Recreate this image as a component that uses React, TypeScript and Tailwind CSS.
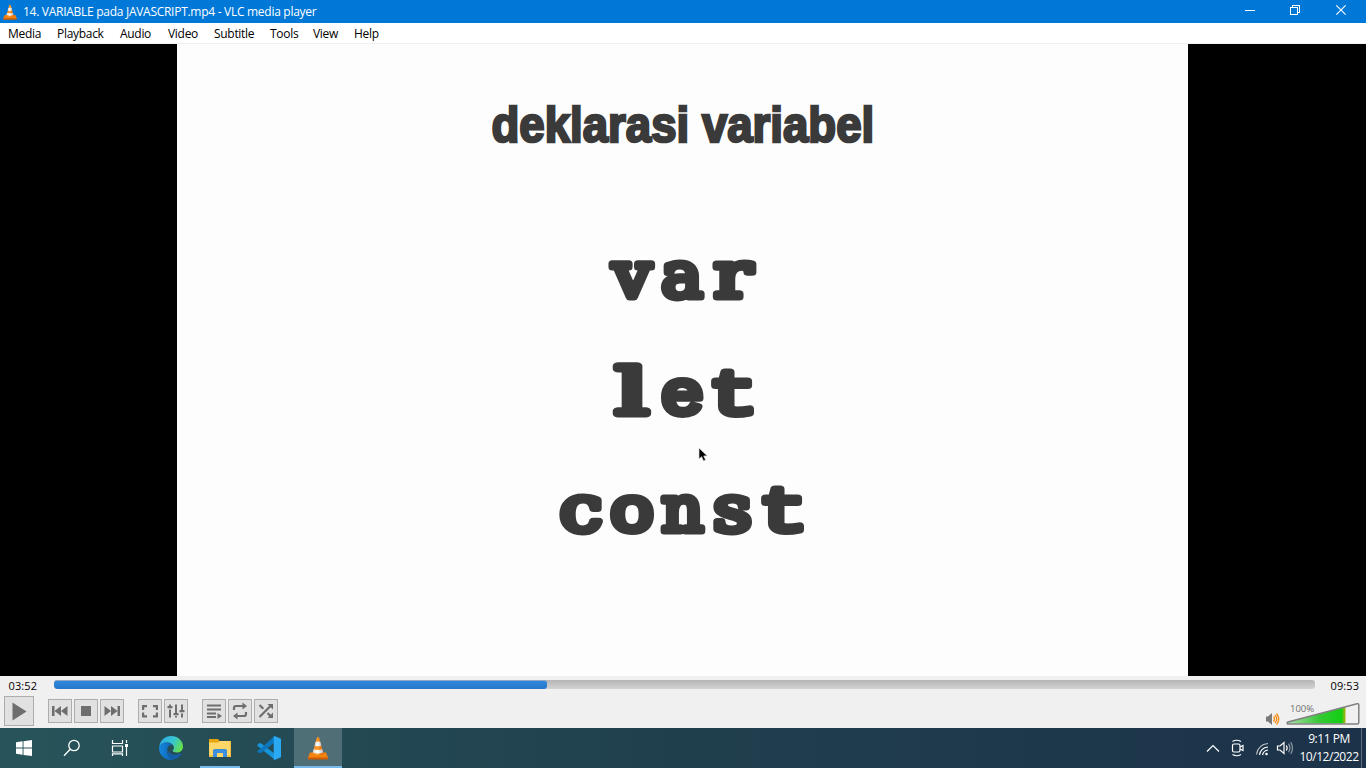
import React from "react";

const UI = "font-['Open_Sans','Noto_Sans',sans-serif]";

function Cone({ size }: { size: number }) {
  return (
    <svg width={size} height={size} viewBox="0 0 24 24" className="block shrink-0">
      <defs>
        <linearGradient id="coneBody" x1="0" x2="1">
          <stop offset="0" stopColor="#f08a1c" />
          <stop offset=".45" stopColor="#ff9a2a" />
          <stop offset="1" stopColor="#d95f00" />
        </linearGradient>
        <linearGradient id="coneWhite" x1="0" x2="1">
          <stop offset="0" stopColor="#d8d8d8" />
          <stop offset=".45" stopColor="#ffffff" />
          <stop offset="1" stopColor="#bdbdbd" />
        </linearGradient>
      </defs>
      <path d="M4 16.500h16l2 5q0 .9-1 .9H3q-1 0-1-.9z" fill="#f18210" />
      <path d="M2 21.500h20l.2 1.200q-.2.9-1.200.9H3q-1 0-1.200-.9z" fill="#d15c00" />
      <path d="M10.900 1.600q1.100-.7 2.200 0L17.600 18q-5.600 2.800-11.200 0z" fill="url(#coneBody)" />
      <path d="M9.700 5.700h4.600l1.100 4q-3.400 1.300-6.800 0z" fill="url(#coneWhite)" />
      <path d="M7.600 13.300q4.400 1.500 8.800 0l.9 3.300q-5.300 2.300-10.600 0z" fill="url(#coneWhite)" />
    </svg>
  );
}

function TitleBar() {
  return (
    <div className="flex h-[23px] shrink-0 items-center bg-[#0078d7] text-white">
      <div className="ml-[2px] flex w-[21px] items-center">
        <Cone size={16} />
      </div>
      <span className="grow whitespace-nowrap text-[12px] leading-[23px] tracking-[-0.28px]">
        14. VARIABLE pada JAVASCRIPT.mp4 - VLC media player
      </span>
      <svg width="139" height="23" viewBox="0 0 139 23" fill="none" stroke="#fff" className="shrink-0">
        <path d="M18 10.500h10" shapeRendering="crispEdges" />
        <path d="M63.500 7.500h7v7h-7z M65.500 7.500v-2h7v7h-2" shapeRendering="crispEdges" />
        <path d="M109.300 5.300l9.400 9.400M118.700 5.300l-9.400 9.400" strokeWidth="1.100" />
      </svg>
    </div>
  );
}

const menus: [string, string][] = [
  ["Media", "w-[49px]"],
  ["Playback", "w-[63px]"],
  ["Audio", "w-[48px]"],
  ["Video", "w-[46px]"],
  ["Subtitle", "w-[56px]"],
  ["Tools", "w-[43px]"],
  ["View", "w-[41px]"],
  ["Help", "w-[40px]"],
];

function MenuBar() {
  return (
    <div className="flex h-[21px] shrink-0 border-b border-[#f0f0f0] bg-white pl-2 text-[12px] leading-[21px] tracking-[-0.3px] text-black">
      {menus.map(([name, w]) => (
        <span key={name} className={`${w} whitespace-nowrap`}>
          {name}
        </span>
      ))}
    </div>
  );
}

const SERIF = "'DejaVu Serif', serif";
const MONO = "'Liberation Mono', monospace";

/* [character, font, centre x, advance width] */
type Glyph = [string, string, number, number];

const words: { y: number; glyphs: Glyph[] }[] = [
  { y: 56.5, glyphs: [["v", SERIF, 455, 39], ["a", SERIF, 505, 41.500], ["r", SERIF, 556, 38]] },
  { y: 174, glyphs: [["l", SERIF, 455, 33], ["e", MONO, 505.300, 44], ["t", MONO, 556, 50]] },
  {
    y: 291,
    glyphs: [["c", SERIF, 404, 42.500], ["o", MONO, 455, 45.500], ["n", SERIF, 505.500, 42], ["s", SERIF, 555.500, 38.500], ["t", MONO, 606, 50]],
  },
];

function Keywords() {
  return (
    <svg
      width="1011"
      height="320"
      viewBox="0 0 1011 320"
      className="block fill-[#3a3a3a] stroke-[#3a3a3a] text-[63px]"
      strokeWidth="7"
      strokeLinejoin="round"
      strokeLinecap="round"
    >
      {words.map((w) => (
        <text key={w.y} y={w.y}>
          {w.glyphs.map(([c, font, cx, adv], i) => (
            <tspan key={i} x={cx - adv / 2} textLength={adv} lengthAdjust="spacingAndGlyphs" fontFamily={font}>
              {c}
            </tspan>
          ))}
        </text>
      ))}
    </svg>
  );
}

function Video() {
  return (
    <div className="flex h-[632px] shrink-0 justify-center bg-black pr-[1px]">
      <div className="relative flex w-[1011px] flex-col items-center bg-[#fdfdfd]">
        <h1 className="mt-[51px] h-[60px] origin-center scale-x-[0.912] whitespace-nowrap font-['Liberation_Sans',sans-serif] text-[50px] leading-[60px] font-bold text-[#3a3a3a] [-webkit-text-stroke:2.500px_#3a3a3a]">
          deklarasi variabel
        </h1>
        <div className="mt-[85px]">
          <Keywords />
        </div>
        <svg width="12" height="16" viewBox="0 0 12 16" className="absolute top-[403px] left-[521px]">
          <path d="M1 1v11l2.600-2.300 1.900 4.200 2.100-.9-1.900-4.100h3.600z" fill="#000" stroke="#ddd" strokeWidth=".7" />
        </svg>
      </div>
    </div>
  );
}

function Btn({ children }: { children: React.ReactNode }) {
  return (
    <div className="flex size-6 items-center justify-center border border-[#adadad] bg-[#e1e1e1]">
      <svg width="22" height="22" viewBox="0 0 22 22" fill="#6e6e6e" className="block shrink-0">
        {children}
      </svg>
    </div>
  );
}

function Controls() {
  return (
    <div className="flex h-[52px] shrink-0 flex-col bg-[#f0f0f0] text-black">
      <div className="flex h-5 items-start">
        <span className="w-[54px] pl-[8.500px] text-[11px] leading-5 tracking-[0.1px]">03:52</span>
        <div className="mt-[4px] h-[9px] w-[1261px] overflow-hidden rounded-[3px] bg-linear-to-b from-[#b5b5b5] to-[#d3d3d3]">
          <div className="h-full w-[493px] rounded-[3px] border-t border-[#8ea9c4] bg-linear-to-b from-[#2f88dc] to-[#2678ca]" />
        </div>
        <span className="grow pl-[15.500px] text-[11px] leading-5 tracking-[0.1px]">09:53</span>
      </div>
      <div className="flex h-8 items-start pl-1">
        <div className="flex size-[30px] border border-[#adadad] bg-[#e1e1e1]">
          <svg width="28" height="28" viewBox="0 0 28 28">
            <path d="M7.500 5.500v18L21.500 14.500z" fill="#6e6e6e" />
          </svg>
        </div>
        <div className="mt-[3px] ml-[14px] flex gap-[2px]">
          <Btn>
            <path d="M3 6h2.500v10H3zM12 6v10l-6.500-5zM18.500 6v10L12 11z" />
          </Btn>
          <Btn>
            <path d="M6 6h10v10H6z" />
          </Btn>
          <Btn>
            <path d="M3.500 6v10l6.500-5zM10 6v10l6.500-5zM16.500 6H19v10h-2.500z" />
          </Btn>
        </div>
        <div className="mt-[3px] ml-[14px] flex gap-[2px]">
          <Btn>
            <path d="M3 5h5v2.200H5.200V10H3zM14 5h5v5h-2.200V7.200H14zM3 12.500h2.200v2.800H8v2.200H3zM16.800 12.500H19v5h-5v-2.200h2.800z" />
          </Btn>
          <Btn>
            <path d="M4 4.500h2V6h1.500v2.200h-5V6H4zM4 9.500h2v8H4zM10 4.500h2V13h1.500v2.200h-5V13H10zM10 16h2v1.500h-2zM16 4.500h2V10h1.500v2.200h-5V10H16zM16 13.500h2v4h-2z" />
          </Btn>
        </div>
        <div className="mt-[3px] ml-[14px] flex gap-[2px]">
          <Btn>
            <path d="M4 4.500h14v2H4zM4 8.500h14v2H4zM4 12.500h9v2H4zM4 16h9v2H4zM14.500 13v6l4.500-3z" />
          </Btn>
          <Btn>
            <path d="M5 10V8q0-2 2-2h7M17 12v2q0 2-2 2H8" fill="none" stroke="#6e6e6e" strokeWidth="2.200" />
            <path d="M13.500 2.500v7L18 6zM8.500 12.500v7L4 16z" />
          </Btn>
          <Btn>
            <path d="M4.500 5l3.800 3.800M12.500 13l3.500 3.500M4.500 17L16 5.500" fill="none" stroke="#6e6e6e" strokeWidth="2.200" />
            <path d="M12.500 4H18v5.500zM18 12.500V18h-5.500z" />
          </Btn>
        </div>
        <div className="ml-auto flex h-8 w-[101px] items-start">
          <svg width="16" height="16" viewBox="0 0 16 16" className="mt-[15px]" fill="none">
            <path d="M1 5.500h2L7 2v12L3 10.500H1z" fill="#7a7a7a" />
            <path d="M8.500 5.500q2 2.500 0 5M10 4q3.500 4 0 8M11.500 2.500q4.500 5.500 0 11" stroke="#f59120" strokeWidth="1.400" />
          </svg>
          <div className="relative ml-[5px]">
            <svg width="76" height="30" viewBox="0 0 76 30" className="block">
              <defs>
                <linearGradient id="vol" x1="0" x2="1">
                  <stop offset="0" stopColor="#a9dda9" />
                  <stop offset=".55" stopColor="#35c835" />
                  <stop offset=".93" stopColor="#12d012" />
                  <stop offset="1" stopColor="#b0b010" />
                </linearGradient>
              </defs>
              <path d="M2 27.500V26L59.500 11v16.500z" fill="url(#vol)" />
              <path d="M1.500 28q-1-1.300.5-2L71 7.700q1.800-.3 1.800 1.300v17.500q0 1.500-1.500 1.500z" fill="none" stroke="#808080" strokeWidth="1.500" />
            </svg>
            <span className="absolute top-[6px] left-[4px] text-[9.500px] leading-[14px] text-[#707070]">100%</span>
          </div>
        </div>
      </div>
    </div>
  );
}

function Cell({ children, on = "" }: { children: React.ReactNode; on?: string }) {
  return <div className={`relative flex h-10 w-12 items-center justify-center ${on}`}>{children}</div>;
}

function Taskbar() {
  return (
    <div className="flex h-10 shrink-0 bg-linear-to-r from-[#27545a] via-[#203f4d] to-[#1c3249] text-white">
      <Cell>
        <svg width="16" height="16" viewBox="0 0 16 16" fill="#fff">
          <path d="M0 2.300L6.600 1.300V7.600H0zM7.500 1.200L16 0V7.600H7.500zM0 8.500H6.600V14.800L0 13.800zM7.500 8.500H16V16L7.500 14.900z" />
        </svg>
      </Cell>
      <Cell>
        <svg width="18" height="18" viewBox="0 0 18 18" fill="none" stroke="#fff" strokeWidth="1.300">
          <circle cx="11" cy="6.500" r="5.200" />
          <path d="M7.200 10.200L1 16.800" />
        </svg>
      </Cell>
      <Cell>
        <svg width="18" height="18" viewBox="0 0 18 18" fill="none" stroke="#fff" strokeWidth="1.200">
          <path d="M1.500 1v3.500h10V1M1.500 7h10v6h-10zM1.500 17v-2.200h10V17M15.500 1v3M15.500 8v9" />
          <path d="M14 5h3v3h-3z" fill="#fff" stroke="none" />
        </svg>
      </Cell>
      <div className="ml-[3px] flex gap-[1px]">
        <Cell>
          <svg width="24" height="24" viewBox="0 0 24 24">
            <defs>
              <linearGradient id="edgeTop" x1="0" x2="1" y1=".2" y2=".6">
                <stop offset="0" stopColor="#2ba9e8" />
                <stop offset=".55" stopColor="#37c6d0" />
                <stop offset="1" stopColor="#66e04b" />
              </linearGradient>
              <linearGradient id="edgeLow" x1="0" x2="1">
                <stop offset="0" stopColor="#1389e0" />
                <stop offset="1" stopColor="#0f5cab" />
              </linearGradient>
            </defs>
            <path d="M.2 11C1 4.500 6 0 12 0c7 0 12 5 12 10.500 0 4-3 6-6.300 6-2.400 0-4-.8-4-1.700 0-.7 1.200-1.200 1.200-3.100C14.900 8.500 11.500 6.500 8 6.500 4 6.500 1.200 8.600.2 11z" fill="url(#edgeTop)" />
            <path d="M.1 11.200C1.100 8.500 4 6.500 8 6.500c2.600 0 4.600 1 5.800 2.400-3.400-.5-5.800 2.300-5.800 6 0 4.500 3.500 8.100 7.500 8.300C13 24.300 9 24.400 5.500 22 1.600 19.500-.3 15.500.1 11.200z" fill="url(#edgeLow)" />
            <path d="M8.600 12.500C7 17 10 22.800 15.500 23.200c3-.9 5.400-2.800 6.700-5 .3-.6-.2-.9-.7-.6-5.500 2.700-13 .5-12.900-5.100z" fill="#145fa8" />
          </svg>
        </Cell>
        <Cell>
          <svg width="24" height="24" viewBox="0 0 24 24">
            <path d="M1 3h9l1.500 2H23v16H1z" fill="#e5a50f" />
            <path d="M1 6.500h9l1.500-1.500H22.500v16H1z" fill="#ffd768" />
            <path d="M5 21v-6.500q0-1.500 1.500-1.500h11q1.500 0 1.500 1.500V21h-4v-4H9v4z" fill="#3c8fdc" />
            <path d="M1 19h4v2H1zM19 19h3.500v2H19z" fill="#f3c14b" />
          </svg>
          <div className="absolute bottom-0 left-1 h-[2px] w-10 bg-[#76b9ed]" />
        </Cell>
        <Cell>
          <svg width="24" height="24" viewBox="0 0 24 24">
            <path d="M17.200.2L3.500 13.500.7 16.300q-.8-.6 0-1.400L18 2z" fill="#0f7cc4" />
            <path d="M.6 8.500L2 7.300l2-.1L18 18v5.800L.6 9.900q-.6-.7 0-1.400z" fill="#1795dc" />
            <path d="M.6 15.400L17.500.1 18 6.200 4 16.900l-2 .1-1.400-1.200z" fill="#0d77bd" />
            <path d="M17.500 0L24 2.800v18.400L17.500 24q-1-.2-.8-1.500V1.500q-.1-1.300.8-1.500z" fill="#2aa8f2" />
          </svg>
        </Cell>
        <Cell on="bg-white/20">
          <Cone size={24} />
          <div className="absolute bottom-0 left-0 h-[2px] w-12 bg-[#76b9ed]" />
        </Cell>
      </div>
      <div className="ml-auto flex h-10">
        <svg width="96" height="40" viewBox="1202 728 96 40" fill="none" stroke="#fff" strokeWidth="1.200">
          <path d="M1207 751.500l6-6 6 6" />
          <rect x="1232.500" y="744" width="7.500" height="8" rx="1.500" />
          <path d="M1240 747l3-1.500v5l-3-1.500M1232.500 741.500q4-2.500 8.500 0M1232.500 754.500q4 2.500 8.500 0" />
          <circle cx="1266.500" cy="754" r="1.300" fill="#fff" stroke="none" />
          <path d="M1262.500 755q1-4.500 5.500-5M1259.500 755q1.200-7.200 8.500-8" />
          <path d="M1256.500 754.500q1.500-10 11.500-11" opacity=".7" />
          <path d="M1277.500 746h2.500l4-3.500v11l-4-3.500h-2.500z" />
          <path d="M1286.300 745.500q1.700 2.500 0 5" />
          <path d="M1288.500 743.700q2.800 4.200 0 8.600M1290.700 742q3.500 6 0 12" opacity=".5" />
        </svg>
        <div className="flex w-[62px] flex-col items-center pt-[2px] text-[12px] leading-[18px] tracking-[-0.45px] whitespace-nowrap">
          <span>9:11 PM</span>
          <span>10/12/2022</span>
        </div>
        <div className="ml-px h-10 w-[5px] border-l border-[#5f7080]" />
      </div>
    </div>
  );
}

export default function App() {
  return (
    <div className={`flex h-[768px] w-[1366px] flex-col overflow-hidden ${UI}`}>
      <TitleBar />
      <MenuBar />
      <Video />
      <Controls />
      <Taskbar />
    </div>
  );
}
